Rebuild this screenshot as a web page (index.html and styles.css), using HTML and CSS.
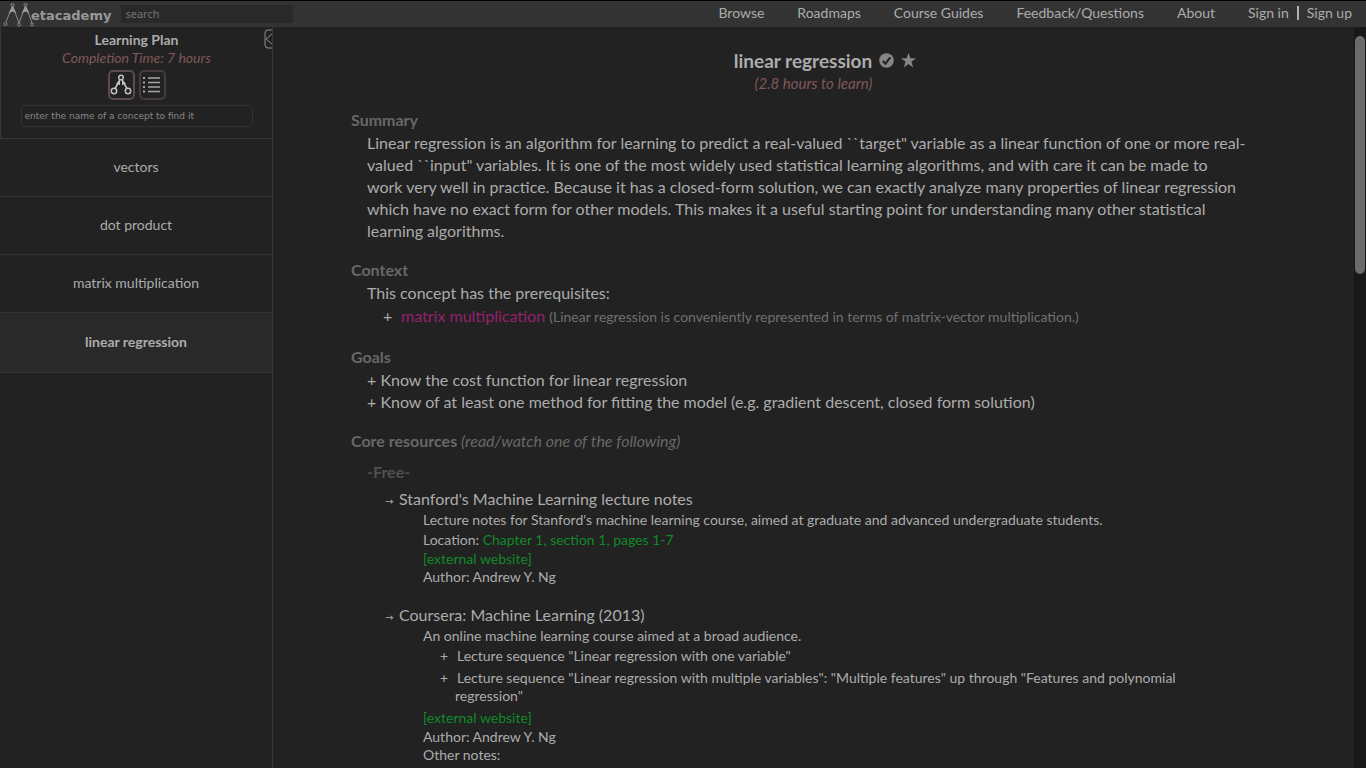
FILE: index.html
```html
<!DOCTYPE html>
<html lang="en">
<head>
<meta charset="utf-8">
<title>linear regression - Metacademy</title>
<link rel="stylesheet" href="styles.css">
</head>
<body>
<header class="topbar">
  <a class="logo" href="#" aria-label="Metacademy">
    <svg class="logo-mark" viewBox="0 0 31 26" width="31" height="26" aria-hidden="true">
      <g fill="none" stroke="#8a8a8a" stroke-width="1">
        <path d="M9 6L3 21M10 6l6 16M22 6l-6 16M23 6l6 16"/>
        <circle cx="9.5" cy="4" r="1.5"/><circle cx="22.500" cy="4" r="1.5"/>
        <circle cx="2.500" cy="23" r="1.5"/><circle cx="16" cy="23.500" r="1.500"/><circle cx="29" cy="23.500" r="1.500"/>
      </g>
      <path fill="#9a9a9a" d="M9.500 4.500l4 8-4-2-4 2zM22.500 4.500l4 8-4-2-4 2z"/>
    </svg>
    <span class="logo-text">etacademy</span>
  </a>
  <input class="search" type="text" placeholder="search" aria-label="search">
  <nav class="nav">
    <a href="#">Browse</a>
    <a href="#">Roadmaps</a>
    <a href="#">Course Guides</a>
    <a href="#">Feedback/Questions</a>
    <a href="#">About</a>
    <span class="account"><a href="#">Sign in</a><span class="divider"></span><a href="#">Sign up</a></span>
  </nav>
</header>
<div class="layout">
  <aside class="sidebar">
    <div class="plan">
      <button class="collapse" type="button" aria-label="collapse">
        <svg viewBox="0 0 8 20" width="8" height="20"><path d="M8 1H4Q1 1 1 4v12q0 3 3 3h4M8 5L2 10l6 5" fill="none" stroke="#8c8c8c"/></svg>
      </button>
      <h2 class="plan-title">Learning Plan</h2>
      <p class="plan-time">Completion Time: 7 hours</p>
      <div class="views">
        <button class="view active" type="button" aria-label="graph view">
          <svg viewBox="0 0 22 22" width="22" height="22"><g fill="none" stroke="#c0c0c0" stroke-width="1.500"><circle cx="11" cy="3.500" r="2.300"/><circle cx="4" cy="17" r="2.700"/><circle cx="18" cy="17" r="2.700"/><path d="M10 6L5 14.500M12 6l5 8.500"/></g><path d="M10 5L6 10l4 1zM12 5l4 5-4 1z" fill="#c0c0c0"/></svg>
        </button>
        <button class="view" type="button" aria-label="list view">
          <svg viewBox="0 0 20 20" width="20" height="20"><path d="M6 3h12M6 7.500h12M6 12h12M6 16.500h12" stroke="#a5a5a5" stroke-width="1.300"/><path d="M1 3h2M1 7.500h2M1 12h2M1 16.500h2" stroke="#a5a5a5" stroke-width="2"/></svg>
        </button>
      </div>
      <input class="find" type="text" placeholder="enter the name of a concept to find it" aria-label="find a concept">
    </div>
    <nav class="concepts">
      <a href="#">vectors</a>
      <a href="#">dot product</a>
      <a href="#">matrix multiplication</a>
      <a class="current" href="#">linear regression</a>
    </nav>
  </aside>
  <main class="content">
    <article class="concept">
      <div class="heading">
        <h1>linear regression</h1>
        <svg viewBox="0 0 14 14" width="15" height="15" aria-hidden="true"><circle cx="7" cy="7" r="6.800" fill="#868686"/><path d="M3.500 7.500l2.500 2.500 4.500-6" fill="none" stroke="#222" stroke-width="2"/></svg>
        <svg viewBox="0 0 14 14" width="15" height="15" aria-hidden="true"><path fill="#868686" d="M7 0l1.800 5H14l-4.200 3.200L11.300 13.500 7 10.300l-4.300 3.200 1.500-5.300L0 5h5.200z"/></svg>
      </div>
      <p class="learn-time">(2.8 hours to learn)</p>

      <section class="block">
        <h2>Summary</h2>
        <p class="text">Linear regression is an algorithm for learning to predict a real-valued ``target" variable as a linear function of one or more real-valued ``input" variables. It is one of the most widely used statistical learning algorithms, and with care it can be made to work very well in practice. Because it has a closed-form solution, we can exactly analyze many properties of linear regression which have no exact form for other models. This makes it a useful starting point for understanding many other statistical learning algorithms.</p>
      </section>

      <section class="block">
        <h2>Context</h2>
        <p class="text">This concept has the prerequisites:</p>
        <ul class="prereqs">
          <li><a href="#">matrix multiplication</a> <span class="reason">(Linear regression is conveniently represented in terms of matrix-vector multiplication.)</span></li>
        </ul>
      </section>

      <section class="block">
        <h2>Goals</h2>
        <ul class="goals">
          <li>Know the cost function for linear regression</li>
          <li>Know of at least one method for fitting the model (e.g. gradient descent, closed form solution)</li>
        </ul>
      </section>

      <section class="block">
        <h2>Core resources <em>(read/watch one of the following)</em></h2>
        <h3>-Free-</h3>
        <div class="resource">
          <h4><span class="arrow">→</span>Stanford's Machine Learning lecture notes</h4>
          <div class="details">
            <p class="roomy">Lecture notes for Stanford's machine learning course, aimed at graduate and advanced undergraduate students.</p>
            <p class="roomy">Location: <a href="#">Chapter 1, section 1, pages 1-7</a></p>
            <p><a href="#">[external website]</a></p>
            <p>Author: Andrew Y. Ng</p>
          </div>
        </div>
        <div class="resource">
          <h4><span class="arrow">→</span>Coursera: Machine Learning (2013)</h4>
          <div class="details">
            <p class="roomy">An online machine learning course aimed at a broad audience.</p>
            <ul class="lectures">
              <li>Lecture sequence "Linear regression with one variable"</li>
              <li>Lecture sequence "Linear regression with multiple variables": "Multiple features" up through "Features and polynomial regression"</li>
            </ul>
            <p class="roomy"><a href="#">[external website]</a></p>
            <p>Author: Andrew Y. Ng</p>
            <p>Other notes:</p>
          </div>
        </div>
      </section>
    </article>
  </main>
  <div class="scrollbar" aria-hidden="true"><div class="thumb"></div></div>
</div>
</body>
</html>
```
FILE: styles.css
```css
* { box-sizing: border-box; }
body {
  margin: 0;
  height: 100vh;
  display: flex;
  flex-direction: column;
  overflow: hidden;
  background: #222;
  color: #acacac;
  font: 16px/22px Lato, Carlito, sans-serif;
}
h1, h2, h3, h4, p, ul { margin: 0; padding: 0; }
ul { list-style: none; }
a { color: inherit; text-decoration: none; }
button { background: none; padding: 0; cursor: pointer; }

.topbar {
  flex: none;
  height: 27px;
  display: flex;
  align-items: center;
  padding: 0 14px 0 3px;
  background: #333;
  border-top: 1px solid #000;
}
.logo { display: flex; align-items: center; }
.logo-text { color: #999; font: bold 13px/16px "DejaVu Sans", sans-serif; padding-top: 4px; margin-left: -3px; }
.search {
  width: 172px;
  height: 18px;
  margin-left: 10px;
  padding: 0 4px 2px;
  border: 0;
  background: #292929;
  color: #999;
  font: 11px/16px "Noto Sans", sans-serif;
}
.search::placeholder { color: #747474; opacity: 1; }
.nav { margin-left: auto; display: flex; gap: 33px; padding-bottom: 2px; font-size: 14px; line-height: 20px; }
.account { display: flex; align-items: center; gap: 8px; }
.divider { width: 2px; height: 14px; background: #b0b0b0; }

.layout { flex: 1; min-height: 0; display: flex; }
.sidebar { flex: none; width: 273px; border-right: 1px solid #383838; font-size: 14px; }
.plan {
  position: relative;
  display: flex;
  flex-direction: column;
  align-items: center;
  height: 112px;
  padding-top: 4px;
  border-left: 1px solid #383838;
  border-bottom: 1px solid #383838;
}
.collapse { position: absolute; top: 2px; right: 0; width: 8px; height: 20px; border: 0; }
.collapse svg { display: block; }
.plan-title { font-size: 14px; line-height: 18px; }
.plan-time { color: #805858; font-style: italic; line-height: 18px; }
.views { display: flex; gap: 4px; margin-top: 3px; }
.view {
  width: 27px;
  height: 30px;
  display: flex;
  align-items: center;
  justify-content: center;
  border: 2px solid #443c3c;
  border-radius: 5px;
}
.view.active { border-color: #5c4a4c; }
.find {
  width: 232px;
  height: 22px;
  margin-top: 5px;
  padding: 0 3px;
  border: 1px solid #333;
  border-radius: 4px;
  background: transparent;
  color: #aaa;
  font: 9px/16px "DejaVu Sans", sans-serif;
}
.find::placeholder { color: #888; opacity: 1; }
.concepts a {
  display: flex;
  align-items: center;
  justify-content: center;
  height: 58px;
  padding-bottom: 1px;
  border-bottom: 1px solid #333;
}
.concepts .current { height: 60px; background: #292929; font-weight: bold; }

.content { flex: 1; min-width: 0; overflow: hidden; padding: 22px 78px 0; }
.heading { display: flex; align-items: center; justify-content: center; gap: 7px; padding-left: 23px; }
.heading h1 { font-size: 19px; line-height: 23px; }
.learn-time { color: #805858; font-size: 15px; font-style: italic; text-align: center; }
.block { margin-bottom: 16px; padding-left: 16px; }
.learn-time + .block { margin-top: 14px; }
.block h2 { margin-left: -16px; color: #686868; font-size: 16px; line-height: 24px; }
.block em { font-weight: normal; }
.text { padding-right: 30px; }
.prereqs li { padding-left: 34px; line-height: 24px; }
.prereqs li::before { content: "+"; display: inline-block; width: 18px; margin-left: -18px; }
.prereqs a { color: #96206e; }
.reason { color: #707070; font-size: 14px; }
.goals li::before { content: "+ "; }
.block h3 { margin-top: 7px; color: #505050; font-size: 16px; line-height: 24px; }
.resource { padding-left: 16px; margin: 5px 0 19px; }
.resource h4 { font-size: 16px; line-height: 20px; font-weight: normal; }
.arrow { display: inline-block; width: 16px; padding-left: 2px; font: 10px/16px "DejaVu Sans", sans-serif; }
.details { padding-left: 40px; font-size: 14px; line-height: 18px; }
.details .roomy { line-height: 20px; }
.details a { color: #108a28; }
.lectures { display: grid; gap: 4px; padding: 1px 0 3px; }
.lectures li { padding: 0 80px 0 32px; text-indent: -15px; }
.lectures li::before { content: "+"; display: inline-block; width: 17px; text-indent: 0; }

.scrollbar { flex: none; width: 12px; padding: 9px 1px 0; background: #181818; }
.thumb { height: 238px; border-radius: 5px; background: #6b6b6b; }
```
